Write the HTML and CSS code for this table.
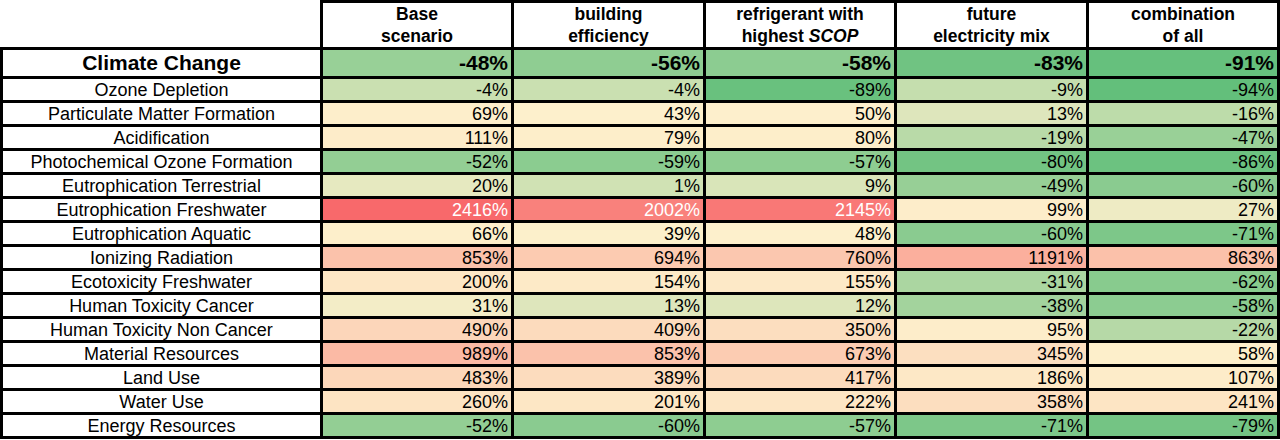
FILE: index.html
```html
<!DOCTYPE html>
<html lang="en">
<head>
<meta charset="utf-8">
<title>Impact reduction by scenario</title>
<link rel="stylesheet" href="styles.css">
</head>
<body>
<table class="impact">
  <colgroup>
    <col class="c-label"><col class="c-d1"><col class="c-d2"><col class="c-d3"><col class="c-d4"><col class="c-d5">
  </colgroup>
  <thead>
    <tr class="head">
      <th class="corner"></th>
      <th>Base<br>scenario</th>
      <th>building<br>efficiency</th>
      <th>refrigerant with<br>highest <i>SCOP</i></th>
      <th>future<br>electricity mix</th>
      <th>combination<br>of all</th>
    </tr>
  </thead>
  <tbody>
    <tr class="main"><td class="lbl">Climate Change</td><td class="v">-48%</td><td class="v">-56%</td><td class="v">-58%</td><td class="v">-83%</td><td class="v">-91%</td></tr>
    <tr><td class="lbl">Ozone Depletion</td><td class="v">-4%</td><td class="v">-4%</td><td class="v">-89%</td><td class="v">-9%</td><td class="v">-94%</td></tr>
    <tr><td class="lbl">Particulate Matter Formation</td><td class="v">69%</td><td class="v">43%</td><td class="v">50%</td><td class="v">13%</td><td class="v">-16%</td></tr>
    <tr><td class="lbl">Acidification</td><td class="v">111%</td><td class="v">79%</td><td class="v">80%</td><td class="v">-19%</td><td class="v">-47%</td></tr>
    <tr><td class="lbl">Photochemical Ozone Formation</td><td class="v">-52%</td><td class="v">-59%</td><td class="v">-57%</td><td class="v">-80%</td><td class="v">-86%</td></tr>
    <tr><td class="lbl">Eutrophication Terrestrial</td><td class="v">20%</td><td class="v">1%</td><td class="v">9%</td><td class="v">-49%</td><td class="v">-60%</td></tr>
    <tr><td class="lbl">Eutrophication Freshwater</td><td class="v hot">2416%</td><td class="v hot">2002%</td><td class="v hot">2145%</td><td class="v">99%</td><td class="v">27%</td></tr>
    <tr><td class="lbl">Eutrophication Aquatic</td><td class="v">66%</td><td class="v">39%</td><td class="v">48%</td><td class="v">-60%</td><td class="v">-71%</td></tr>
    <tr><td class="lbl">Ionizing Radiation</td><td class="v">853%</td><td class="v">694%</td><td class="v">760%</td><td class="v">1191%</td><td class="v">863%</td></tr>
    <tr><td class="lbl">Ecotoxicity Freshwater</td><td class="v">200%</td><td class="v">154%</td><td class="v">155%</td><td class="v">-31%</td><td class="v">-62%</td></tr>
    <tr><td class="lbl">Human Toxicity Cancer</td><td class="v">31%</td><td class="v">13%</td><td class="v">12%</td><td class="v">-38%</td><td class="v">-58%</td></tr>
    <tr><td class="lbl">Human Toxicity Non Cancer</td><td class="v">490%</td><td class="v">409%</td><td class="v">350%</td><td class="v">95%</td><td class="v">-22%</td></tr>
    <tr><td class="lbl">Material Resources</td><td class="v">989%</td><td class="v">853%</td><td class="v">673%</td><td class="v">345%</td><td class="v">58%</td></tr>
    <tr><td class="lbl">Land Use</td><td class="v">483%</td><td class="v">389%</td><td class="v">417%</td><td class="v">186%</td><td class="v">107%</td></tr>
    <tr><td class="lbl">Water Use</td><td class="v">260%</td><td class="v">201%</td><td class="v">222%</td><td class="v">358%</td><td class="v">241%</td></tr>
    <tr><td class="lbl">Energy Resources</td><td class="v">-52%</td><td class="v">-60%</td><td class="v">-57%</td><td class="v">-71%</td><td class="v">-79%</td></tr>
  </tbody>
</table>
<script src="scale.js"></script>
</body>
</html>
```

FILE: styles.css
```css
html, body {
  margin: 0;
  padding: 0;
  background: #ffffff;
}

body {
  font-family: "Liberation Sans", Arial, sans-serif;
  color: #000000;
}

.impact {
  border-collapse: collapse;
  table-layout: fixed;
  width: 1277px;
  margin: 0;
}

.c-label { width: 320px; }
.c-d1 { width: 191px; }
.c-d2 { width: 192px; }
.c-d3 { width: 191px; }
.c-d4 { width: 192px; }
.c-d5 { width: 191px; }

.impact th,
.impact td {
  border: 3px solid #000000;
  padding: 0;
  overflow: hidden;
  white-space: nowrap;
}

.impact th {
  font-size: 17.5px;
  font-weight: bold;
  line-height: 22px;
  text-align: center;
  vertical-align: middle;
}

.impact th.corner {
  border: none;
}

.head {
  height: 47px;
}

.impact tbody tr {
  height: 24px;
}

.impact tbody tr.main {
  height: 29px;
}

.lbl {
  text-align: center;
  font-size: 18px;
  line-height: 20px;
}

.v {
  text-align: right;
  font-size: 18px;
  line-height: 20px;
  padding-right: 3px !important;
}

.main .lbl,
.main .v {
  font-size: 21px;
  font-weight: bold;
  line-height: 24px;
}

.hot {
  color: #ffffff;
}
```

FILE: scale.js
```js
(function () {
  var G = [99, 191, 123], M = [253, 240, 204], R = [248, 105, 107];
  var MIN = -94, MID = 40, MAX = 2416;
  function mix(a, b, t) {
    return 'rgb(' + a.map(function (x, i) { return Math.round(x + (b[i] - x) * t); }).join(',') + ')';
  }
  var cells = document.querySelectorAll('.impact td.v');
  for (var i = 0; i < cells.length; i++) {
    var v = parseFloat(cells[i].textContent);
    var c = v <= MID ? mix(M, G, Math.min(1, (MID - v) / (MID - MIN)))
                     : mix(M, R, Math.min(1, (v - MID) / (MAX - MID)));
    cells[i].style.backgroundColor = c;
  }
})();
```
